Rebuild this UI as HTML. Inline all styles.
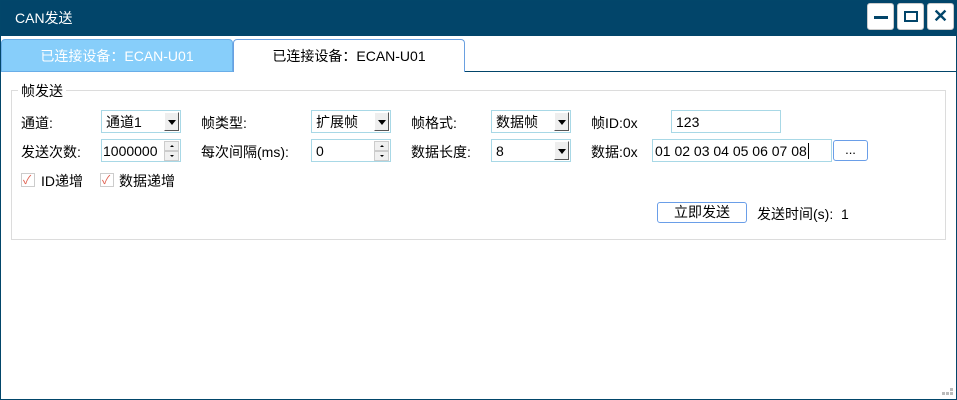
<!DOCTYPE html><html><head><meta charset="utf-8"><style>
*{box-sizing:border-box;margin:0;padding:0}
body{width:957px;height:400px;position:relative;background:#fff;font-family:"Liberation Sans","Noto Sans CJK SC",sans-serif;font-size:13px;color:#000;overflow:hidden}
.a{position:absolute;white-space:nowrap}
.win{left:0;top:0;width:957px;height:400px;border:1px solid #02466a}
.title{left:0;top:0;width:957px;height:36px;background:#02456a;color:#fff;font-size:14px;line-height:36px;padding-left:15px}
.tb{top:3px;width:27px;height:27px;background:#fff;border-radius:3px;border:1px solid #ccc}
.box{border:1px solid #a8d8e6;background:#fff;height:23px;line-height:23px;padding-left:4px;font-size:14px}
.dd{position:absolute;right:1px;top:1px;width:15px;height:19px;background:#eee;border-right:1px solid #555;border-bottom:1px solid #555;border-left:1px solid #fff;border-top:1px solid #fff}
.dd:after{content:"";position:absolute;left:3px;top:7px;border-left:4px solid transparent;border-right:4px solid transparent;border-top:5px solid #000}
.sp{position:absolute;right:1px;width:15px;height:10px;background:#f0f0f0;border:1px solid #ccc}
.sp.u:after{content:"";position:absolute;left:5px;top:3px;border-left:2px solid transparent;border-right:2px solid transparent;border-bottom:2px solid #000}
.sp.d:after{content:"";position:absolute;left:5px;top:3px;border-left:2px solid transparent;border-right:2px solid transparent;border-top:2px solid #000}
.cb{width:14px;height:14px;border:1px solid #ccc}
.l{font-size:14px}
</style></head><body>
<div class="a title">CAN发送</div>
<div class="a tb" style="left:867px"><div class="a" style="left:6px;top:12px;width:14px;height:3px;background:#02456a"></div></div>
<div class="a tb" style="left:897px"><div class="a" style="left:6px;top:7px;width:14px;height:11px;border:2px solid #02456a"></div></div>
<div class="a tb" style="left:927px;color:#02456a;font-size:18px;line-height:24px;text-align:center;font-weight:bold">✕</div>
<div class="a" style="left:1px;top:39px;width:232px;height:33px;background:#87cefa;border:1px solid #6aaee8;border-radius:4px 4px 0 0;color:#fff;text-align:center;line-height:32px;font-size:14px">已连接设备：ECAN-U01</div>
<div class="a" style="left:233px;top:39px;width:232px;height:33px;background:#fff;border:1px solid #6aa0e0;border-bottom:none;border-radius:4px 4px 0 0;text-align:center;line-height:32px;font-size:14px">已连接设备：ECAN-U01</div>
<div class="a" style="left:465px;top:71px;width:491px;height:1px;background:#02456a"></div>
<div class="a" style="left:11px;top:90px;width:935px;height:150px;border:1px solid #dcdcdc"></div>
<div class="a l" style="left:18px;top:82px;background:#fff;padding:0 3px;line-height:18px">帧发送</div>
<div class="a l" style="left:21px;top:113px">通道:</div>
<div class="a box" style="left:101px;top:110px;width:80px">通道1<div class="dd"></div></div>
<div class="a l" style="left:201px;top:113px">帧类型:</div>
<div class="a box" style="left:311px;top:110px;width:80px">扩展帧<div class="dd"></div></div>
<div class="a l" style="left:411px;top:113px">帧格式:</div>
<div class="a box" style="left:491px;top:110px;width:80px">数据帧<div class="dd"></div></div>
<div class="a l" style="left:591px;top:113px">帧ID:0x</div>
<div class="a box" style="left:671px;top:110px;width:110px">123</div>
<div class="a l" style="left:21px;top:142px">发送次数:</div>
<div class="a box" style="left:101px;top:139px;width:80px;padding-left:1px">1000000<div class="sp u" style="top:1px"></div><div class="sp d" style="top:11px"></div></div>
<div class="a l" style="left:201px;top:142px">每次间隔(ms):</div>
<div class="a box" style="left:311px;top:139px;width:80px">0<div class="sp u" style="top:1px"></div><div class="sp d" style="top:11px"></div></div>
<div class="a l" style="left:411px;top:142px">数据长度:</div>
<div class="a box" style="left:491px;top:139px;width:80px">8<div class="dd"></div></div>
<div class="a l" style="left:591px;top:142px">数据:0x</div>
<div class="a box" style="left:652px;top:139px;width:180px;padding-left:2px">01 02 03 04 05 06 07 08<span style="border-left:1px solid #000;margin-left:1px"></span></div>
<div class="a" style="left:833px;top:140px;width:35px;height:21px;border:1px solid #6a9ee8;border-radius:3px;text-align:center;line-height:18px">...</div>
<div class="a cb" style="left:21px;top:173px"></div><div class="a" style="left:23px;top:171px;color:#e06050;font-size:12px">✓</div>
<div class="a l" style="left:41px;top:171px">ID递增</div>
<div class="a cb" style="left:100px;top:173px"></div><div class="a" style="left:102px;top:171px;color:#e06050;font-size:12px">✓</div>
<div class="a l" style="left:119px;top:171px">数据递增</div>
<div class="a l" style="left:657px;top:202px;width:90px;height:21px;border:1px solid #6a9ee8;border-radius:3px;text-align:center;line-height:19px">立即发送</div>
<div class="a l" style="left:757px;top:204px">发送时间(s):&nbsp;&nbsp;1</div>
<div class="a" style="left:946px;top:392px;width:3px;height:3px;background:#bbb;box-shadow:4px 0 #bbb,4px -4px #bbb,0 0 #bbb,-4px 0 #bbb"></div>
<div class="a win"></div>
</body></html>
